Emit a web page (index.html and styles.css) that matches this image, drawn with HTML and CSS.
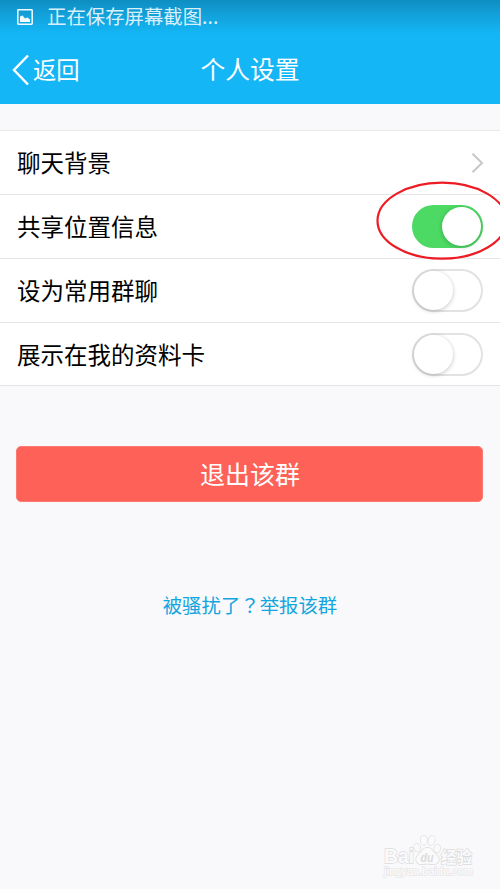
FILE: index.html
```html
<!DOCTYPE html>
<html lang="zh-CN">
<head>
<meta charset="utf-8">
<title>个人设置</title>
<link rel="stylesheet" href="styles.css">
</head>
<body>
<div class="screen">
  <header class="header">
    <div class="status">
      <svg class="status-icon" width="16" height="16" viewBox="0 0 16 16"><rect x=".8" y=".8" width="14.4" height="14.4" rx=".6" fill="none" stroke="currentColor" stroke-width="1.5"/><path d="M3 13V7.5L5.5 6.5L8 9.5L10.5 8.5L13 10.5V13Z" fill="currentColor"/></svg>
      <span>正在保存屏幕截图...</span>
    </div>
    <nav class="nav">
      <a class="back"><svg width="17" height="32" viewBox="0 0 17 32"><path d="M16 1.5L2 16L16 30.5" fill="none" stroke="currentColor" stroke-width="2.5"/></svg><span>返回</span></a>
      <h1 class="title">个人设置</h1>
    </nav>
  </header>
  <main>
    <ul class="list">
      <li class="row"><span class="label">聊天背景</span><svg class="chevron" width="13" height="22" viewBox="0 0 13 22"><path d="M1.5 1.7L11 11L1.5 20.3" fill="none" stroke="currentColor" stroke-width="2"/></svg></li>
      <li class="row"><span class="label">共享位置信息</span>
        <i class="toggle on"></i>
        <svg class="ring" width="132" height="80" viewBox="0 0 132 80"><ellipse cx="66" cy="39.7" rx="64.5" ry="38" fill="none" stroke="#ed1c24" stroke-width="2.2"/></svg>
      </li>
      <li class="row"><span class="label">设为常用群聊</span><i class="toggle"></i></li>
      <li class="row"><span class="label">展示在我的资料卡</span><i class="toggle"></i></li>
    </ul>
    <button class="quit">退出该群</button>
    <a class="report">被骚扰了<span class="mark-centered" lang="zh-TW">？</span>举报该群</a>
  </main>
  <svg class="watermark" width="96" height="48" viewBox="0 0 96 48">
    <g class="mark">
      <text class="brand" x="4" y="31.3" textLength="30" lengthAdjust="spacingAndGlyphs">Bai</text>
      <ellipse cx="37.2" cy="15.8" rx="3" ry="3.9" transform="rotate(-15 37.2 15.8)"/>
      <ellipse cx="43.8" cy="8.2" rx="3.2" ry="4.5"/>
      <ellipse cx="51.6" cy="8.5" rx="3.2" ry="4.5" transform="rotate(12 51.6 8.5)"/>
      <ellipse cx="57.2" cy="16.7" rx="3" ry="3.9" transform="rotate(15 57.2 16.7)"/>
      <path d="M47.5 15.8C43.5 15.8 42 19.5 39.5 21.7C34 25.8 35.5 32.3 42 32.2C45 31.7 49.5 31.7 53 32.2C59.5 32.3 61 25.8 55.5 21.7C52.8 19.2 51.5 15.8 47.5 15.8Z"/>
      <text class="du" x="40.5" y="29.5" textLength="13" lengthAdjust="spacingAndGlyphs">du</text>
      <text class="exp" x="61" y="30.5">经验</text>
      <text class="url" x="4" y="43" textLength="89" lengthAdjust="spacingAndGlyphs">jingyan.baidu.com</text>
    </g>
  </svg>
</div>
</body>
</html>
```
FILE: styles.css
```css
* { box-sizing: border-box; }
body {
  margin: 0;
  background: #f9f9fb;
  font-family: "Noto Sans CJK SC", sans-serif;
}
.screen {
  position: relative;
  height: 889px;
  overflow: hidden;
}
.header {
  height: 104px;
  background: linear-gradient(#0f8ec2 0, #12a1da 15px, #14b6f6 34px, #14b6f6 100%);
  color: #fff;
}
.status {
  display: flex;
  align-items: center;
  gap: 14px;
  height: 34px;
  padding: 0 17px 2px;
  font-size: 19.4px;
  line-height: 32px;
  color: #d9f0fa;
}
.status-icon { margin-top: 2px; color: #f2fbff; }
.nav {
  display: grid;
  grid-template-columns: 1fr auto 1fr;
  align-items: center;
  height: 70px;
  padding: 0 12px;
}
.back {
  display: flex;
  align-items: center;
  gap: 4px;
  font-size: 23.3px;
  line-height: 70px;
}
.back svg { margin-top: 1px; }
.title {
  margin: 0;
  font-size: 24.8px;
  font-weight: 400;
  line-height: 68px;
  padding-bottom: 2px;
}
.list {
  margin: 26px 0 0;
  padding: 0;
  list-style: none;
  border-top: 1px solid #e8e8ea;
  background: #fff;
}
.row {
  position: relative;
  display: flex;
  align-items: center;
  justify-content: space-between;
  height: 64px;
  padding: 0 16.6px 0 17px;
  border-bottom: 1px solid #e5e5e7;
  font-size: 23.5px;
  color: #000;
}
.row:last-child { height: 63px; }
.label { padding-bottom: 2px; }
.row:last-child .label { padding-bottom: 0; }
.chevron { margin-right: -1px; color: #c7c7cc; }
.toggle {
  display: flex;
  width: 71px;
  height: 43px;
  border: 2px solid #e2e2e2;
  border-radius: 22px;
  background: #fff;
}
.toggle::before {
  content: "";
  width: 39px;
  height: 39px;
  border-radius: 50%;
  background: #fff;
  box-shadow: 0 1px 4px rgba(0, 0, 0, .24);
}
.toggle.on {
  justify-content: flex-end;
  border-color: #4cd964;
  background: #4cd964;
}
.ring {
  position: absolute;
  left: 376px;
  top: -14px;
}
.quit {
  display: block;
  width: 467px;
  height: 55.5px;
  margin: 60px 0 0 16.4px;
  padding: 0 0 2px;
  border: 1px solid #fc7b71;
  border-radius: 5px;
  background: #fd6157;
  color: #fff;
  font: 25px/52px "Noto Sans CJK SC", sans-serif;
}
.report {
  display: block;
  margin-top: 88.5px;
  font-size: 19.4px;
  line-height: 30px;
  text-align: center;
  color: #12a5e0;
}
.mark-centered { font-family: "Noto Sans CJK TC", sans-serif; }
.watermark {
  position: absolute;
  left: 380px;
  top: 832px;
}
.mark {
  fill: #fafafb;
  stroke: #dcdcde;
  stroke-width: 1.4px;
  paint-order: stroke;
  font-family: "Liberation Sans", "Noto Sans CJK SC", sans-serif;
}
.brand { font-size: 21px; font-weight: 700; }
.du { font-size: 12.5px; font-weight: 700; font-style: italic; fill: #dcdcde; stroke: none; }
.exp { font-family: "Noto Sans CJK SC", sans-serif; font-size: 15.5px; font-weight: 700; }
.url { font-size: 11px; fill: #fff; stroke: #e6e6e8; }
```
